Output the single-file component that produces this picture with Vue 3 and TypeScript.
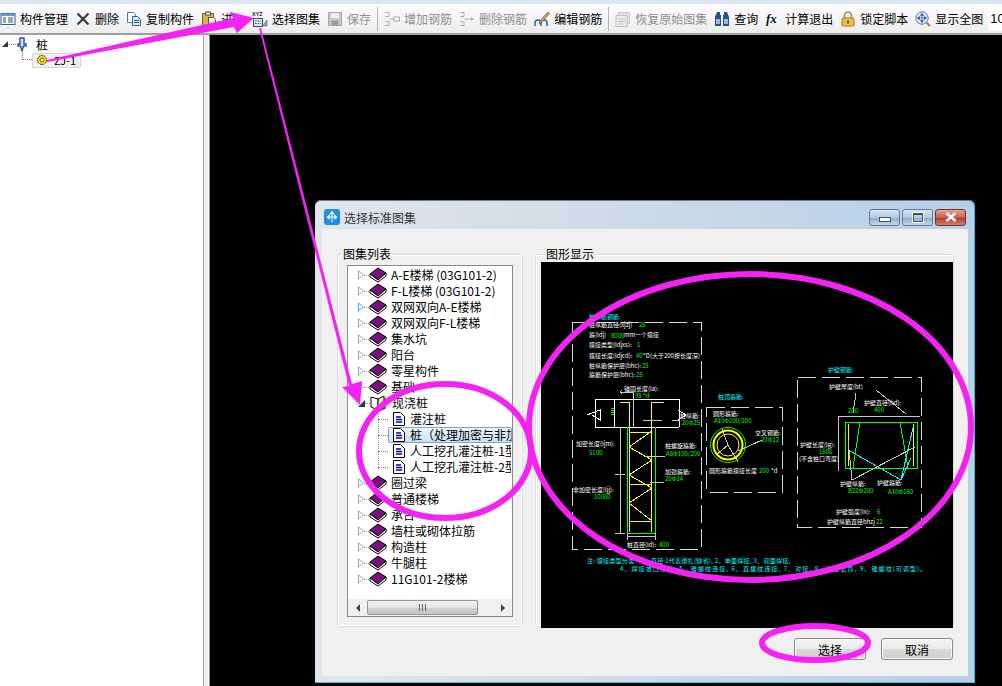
<template>
  <div class="app">
    <svg class="defs" width="0" height="0">
      <symbol id="i-mgr" viewBox="0 0 16 16">
        <rect x="1" y="2.5" width="14" height="11" fill="#fff" stroke="#2f5f9f" />
        <rect x="1" y="2.5" width="14" height="2.5" fill="#6f9ad0" />
        <path d="M3 7h3M3 9h3M3 11h3M8 7h5M8 9h5M8 11h5" stroke="#2a4f86" />
      </symbol>
      <symbol id="i-del" viewBox="0 0 16 16">
        <path d="M2.5 2.5l11 11M13.5 2.5l-11 11" stroke="#3c3c3c" stroke-width="2.2" />
      </symbol>
      <symbol id="i-copy" viewBox="0 0 16 16">
        <path d="M1.5 1.5h6l2 2v8h-8z" fill="#fff" stroke="#4f78b0" />
        <path d="M6.5 5.5h5l3 3v6h-8z" fill="#dbe8f8" stroke="#2f5f9f" />
        <path d="M8 9.5h5M8 11.5h5" stroke="#2f5f9f" />
      </symbol>
      <symbol id="i-paste" viewBox="0 0 16 16">
        <rect x="1.5" y="2.5" width="11" height="12" fill="#d8b24a" stroke="#7d5f17" />
        <rect x="4.5" y="1" width="5" height="3" fill="#e8e8e8" stroke="#555" />
        <path d="M7.5 6.5h5l2 2v6h-7z" fill="#fff" stroke="#555" />
      </symbol>
      <symbol id="i-xyz" viewBox="0 0 16 16">
        <rect x="1.5" y="7.5" width="9" height="8" fill="#dfe8f3" stroke="#2f4f80" />
        <path d="M3 10h6M3 12.5h6" stroke="#2f4f80" stroke-dasharray="1.5 1" />
        <path d="M10 15l5-6v6z" fill="#8aa7c8" stroke="#5a5a5a" stroke-width=".6" />
      </symbol>
      <symbol id="i-save" viewBox="0 0 16 16">
        <path d="M1.5 1.5h13v13h-13z" fill="#c9c9c9" stroke="#a6a6a6" />
        <rect x="4" y="2" width="8" height="5" fill="#f2f2f2" />
        <rect x="4.5" y="9.5" width="7" height="5" fill="#9d9d9d" />
      </symbol>
      <symbol id="i-add" viewBox="0 0 16 16">
        <path d="M1 1.5h4v4H1M1 10.5h4v4H1M5 8h4" fill="none" stroke="#b0b0b0" />
        <rect x="9.5" y="6" width="6" height="4" fill="#efefef" stroke="#b0b0b0" />
      </symbol>
      <symbol id="i-rem" viewBox="0 0 16 16">
        <path d="M1 1.5h4v4H1M1 10.5h4v4H1M5 8h8" fill="none" stroke="#b0b0b0" />
        <path d="M12 6l3 2-3 2z" fill="#b0b0b0" />
      </symbol>
      <symbol id="i-edit" viewBox="0 0 16 16">
        <path d="M1 15v-3q0-3 3-3t3 3v3M7 15v-3q0-3 3-3t3 3v3" fill="none" stroke="#2c5fa8" stroke-width="1.5" />
        <path d="M6 10l8-9 1.5 1.5-8 9-2.500 1z" fill="#e2a85a" stroke="#5c3f1b" stroke-width=".7" />
      </symbol>
      <symbol id="i-restore" viewBox="0 0 16 16">
        <rect x="3.500" y="1.500" width="11" height="11" fill="#e4e4e4" stroke="#c8c8c8" />
        <rect x="1" y="4.500" width="11" height="11" fill="#ececec" stroke="#c0c0c0" />
        <path d="M3 8h7M3 10.500h7M3 13h5" stroke="#c0c0c0" />
      </symbol>
      <symbol id="i-find" viewBox="0 0 16 16">
        <path d="M3 1h3v3h1v11H1V6zM10 1h3l2 5v9H9V4h1z" fill="#2c4f90" />
        <rect x="2" y="8" width="4" height="5" fill="#9cb8e4" />
        <rect x="10" y="8" width="4" height="5" fill="#9cb8e4" />
      </symbol>
      <symbol id="i-lock" viewBox="0 0 16 16">
        <path d="M4.500 7V4.500a3.500 3.500 0 0 1 7 0V7" fill="none" stroke="#9a8a5a" stroke-width="1.600" />
        <rect x="2" y="7" width="12" height="8" rx="1" fill="#f0c040" stroke="#a07818" />
        <rect x="7" y="9.500" width="2" height="3" fill="#6b4d0a" />
      </symbol>
      <symbol id="i-zoom" viewBox="0 0 16 16">
        <circle cx="7" cy="7" r="6.200" fill="#dbe6f6" stroke="#5878a8" />
        <path d="M7 3v8M3 7h8M7 2.500L5.500 4.500h3zM7 11.500L5.500 9.500h3zM2.500 7l2-1.500v3zM11.500 7l-2-1.500v3z" fill="#1f4f9c" stroke="#1f4f9c" stroke-width=".6" />
        <path d="M11.500 11.500l3.500 3.500" stroke="#b8763a" stroke-width="2" />
      </symbol>
      <symbol id="i-book" viewBox="0 0 18 16">
        <path d="M1 7l8-6 8 5-8 7z" fill="#7b0f7b" stroke="#000" />
        <path d="M1 7v3l8 5 8-6V6l-8 7z" fill="#fff" stroke="#000" />
      </symbol>
      <symbol id="i-open" viewBox="0 0 18 16">
        <path d="M1 2l7 2v11l-7-3z" fill="#fff" stroke="#000" />
        <path d="M8 4l6-3v11l-6 3z" fill="#f4ee9a" stroke="#000" />
        <path d="M15 3v10l-6 3" fill="none" stroke="#7b0f7b" stroke-width="1.500" />
      </symbol>
      <symbol id="i-doc" viewBox="0 0 14 16">
        <path d="M1.500 1.500h7l4 4v9h-11z" fill="#fff" stroke="#000" />
        <path d="M4 6h5M4 8.500h6M4 11h6" stroke="#0000a0" stroke-width="1.400" />
      </symbol>
    </svg>

    <header class="toolbar">
      <template v-for="item in tools" :key="item.label">
        <span v-if="item.sep" class="sep"></span>
        <div class="tool" :class="{ off: item.off }">
          <svg class="tool-icon" viewBox="0 0 16 16">
            <use v-if="item.icon" :href="'#' + item.icon" />
            <text v-if="item.icon === 'i-xyz'" x="0" y="5" class="xyz">XYZ</text>
            <text v-if="!item.icon" x="1" y="12" class="fx">fx</text>
          </svg>
          <span>{{ item.label }}</span>
        </div>
      </template>
      <div class="zoom-box">10</div>
    </header>

    <div class="main">
      <aside class="side">
        <div class="side-row">
          <span class="tri-open"></span>
          <span class="side-dots"></span>
          <svg class="pile-icon" viewBox="0 0 10 15">
            <path d="M3 1h4v6h2v2H6.500L5 14 3.500 9H1V7h2z" fill="#dfeafa" stroke="#2456b4" stroke-width="1.500" />
          </svg>
          <span class="side-label">桩</span>
        </div>
        <div class="side-row sub">
          <span class="side-twig"></span>
          <div class="side-chip">
            <svg class="gear" viewBox="0 0 12 12">
              <circle cx="6" cy="6" r="4.500" fill="#ffe600" stroke="#000" stroke-dasharray="1.500 1" />
              <circle cx="6" cy="6" r="2" fill="#fff" stroke="#6a5a00" />
            </svg>
            <span>ZJ-1</span>
          </div>
        </div>
      </aside>
      <div class="splitter"></div>

      <section class="canvas">
        <div class="dialog">
          <div class="titlebar">
            <svg class="title-icon" viewBox="0 0 16 16">
              <rect width="16" height="16" rx="3" fill="#1f8fea" />
              <path d="M8 3v10M3 8h10M8 2.500L6 5h4zM3 8l2.500-2v4zM13 8l-2.500-2v4z" fill="#fff" stroke="#fff" />
            </svg>
            <span class="title-text">选择标准图集</span>
            <div class="win-btns">
              <span class="win-btn"><i class="min"></i></span>
              <span class="win-btn"><i class="max"></i></span>
              <span class="win-btn close">
                <svg viewBox="0 0 12 10" width="12" height="10"><path d="M1.500 1l9 8M10.500 1l-9 8" stroke="#fff" stroke-width="2.400" /></svg>
              </span>
            </div>
          </div>

          <div class="dialog-body">
            <div class="panes">
              <div class="group list-group">
                <span class="group-label">图集列表</span>
                <div class="tree-box">
                  <div class="tree">
                    <template v-for="row in treeRows" :key="row.label">
                      <div v-if="row.kind !== 'doc'" class="row">
                        <span class="arrow" :class="row.state"></span>
                        <span class="row-dots"></span>
                        <svg class="book"><use :href="row.kind === 'open' ? '#i-open' : '#i-book'" /></svg>
                        <span class="row-text">{{ row.label }}</span>
                      </div>
                      <div v-else class="row leaf">
                        <span class="leaf-twig"></span>
                        <div class="leaf-body" :class="{ picked: row.state === 'picked' }">
                          <svg class="doc"><use href="#i-doc" /></svg>
                          <span class="row-text">{{ row.label }}</span>
                        </div>
                      </div>
                    </template>
                    <span class="tree-spine"></span>
                  </div>
                  <div class="hscroll">
                    <span class="scroll-arrow left"></span>
                    <div class="scroll-track">
                      <div class="scroll-thumb"><span class="grip"></span></div>
                    </div>
                    <span class="scroll-arrow right"></span>
                  </div>
                </div>
              </div>

              <div class="group view-group">
                <span class="group-label">图形显示</span>
                <svg class="drawing" viewBox="541 262 412 366" width="412" height="366">
                  <g fill="none" stroke="#d8d8d8" shape-rendering="crispEdges">
                    <rect v-for="r in dashRects" :key="r.x" :x="r.x" :y="r.y" :width="r.w" :height="r.h" stroke-dasharray="18 6" />
                  </g>
                  <path
                    v-for="p in cadPaths"
                    :key="p.d"
                    :d="p.d"
                    :stroke="p.c"
                    fill="none"
                    shape-rendering="crispEdges"
                  />
                  <circle cx="728" cy="445" r="17.500" fill="none" stroke="#00ff00" />
                  <circle cx="728" cy="445" r="14.500" fill="none" stroke="#ffff00" stroke-width="2" />
                  <circle cx="728" cy="445" r="11" fill="none" stroke="#ffff00" />
                  <text
                    v-for="t in cadTexts"
                    :key="t.s + t.x"
                    :x="t.x"
                    :y="t.y"
                    :fill="t.c"
                    :letter-spacing="t.sp"
                    class="cad"
                  >{{ t.s }}</text>
                </svg>
              </div>
            </div>

            <div class="footer">
              <button class="btn">选择</button>
              <button class="btn">取消</button>
            </div>
          </div>
        </div>
      </section>
    </div>

    <!-- 标注层：洋红箭头和圈 -->
    <svg class="marks" viewBox="0 0 1002 686" width="1002" height="686">
      <g fill="#f423f4">
        <polygon points="47,60 233,18 230,12 254,18 237,33 234,27 47,62" />
        <polygon points="259,28 261,28 352,384 362,381 360,405 342,387 349,386" />
      </g>
      <g fill="none" stroke="#f423f4" stroke-width="6">
        <ellipse cx="750" cy="427" rx="221" ry="153" />
        <ellipse cx="445" cy="451" rx="86" ry="67" />
        <ellipse cx="815" cy="643" rx="53" ry="17" />
      </g>
    </svg>
  </div>
</template>

<script setup lang="ts">
interface Tool {
  icon: string;
  label: string;
  off?: boolean;
  sep?: boolean;
}

interface TreeRow {
  label: string;
  kind: 'book' | 'open' | 'doc';
  state?: string;
}

const tools: Tool[] = [
  { icon: 'i-mgr', label: '构件管理' },
  { icon: 'i-del', label: '删除' },
  { icon: 'i-copy', label: '复制构件' },
  { icon: 'i-paste', label: '进入' },
  { icon: 'i-xyz', label: '选择图集' },
  { icon: 'i-save', label: '保存', off: true },
  { icon: 'i-add', label: '增加钢筋', off: true, sep: true },
  { icon: 'i-rem', label: '删除钢筋', off: true },
  { icon: 'i-edit', label: '编辑钢筋' },
  { icon: 'i-restore', label: '恢复原始图集', off: true, sep: true },
  { icon: 'i-find', label: '查询' },
  { icon: '', label: '计算退出' },
  { icon: 'i-lock', label: '锁定脚本' },
  { icon: 'i-zoom', label: '显示全图' },
];

const treeRows: TreeRow[] = [
  { label: 'A-E楼梯 (03G101-2)', kind: 'book' },
  { label: 'F-L楼梯 (03G101-2)', kind: 'book' },
  { label: '双网双向A-E楼梯', kind: 'book', state: 'hot' },
  { label: '双网双向F-L楼梯', kind: 'book' },
  { label: '集水坑', kind: 'book' },
  { label: '阳台', kind: 'book' },
  { label: '零星构件', kind: 'book' },
  { label: '基础', kind: 'book' },
  { label: '现浇桩', kind: 'open', state: 'down' },
  { label: '灌注桩', kind: 'doc' },
  { label: '桩（处理加密与非加密）', kind: 'doc', state: 'picked' },
  { label: '人工挖孔灌注桩-1型', kind: 'doc' },
  { label: '人工挖孔灌注桩-2型', kind: 'doc' },
  { label: '圈过梁', kind: 'book' },
  { label: '普通楼梯', kind: 'book' },
  { label: '承台', kind: 'book' },
  { label: '墙柱或砌体拉筋', kind: 'book' },
  { label: '构造柱', kind: 'book' },
  { label: '牛腿柱', kind: 'book' },
  { label: '11G101-2楼梯', kind: 'book' },
];

const W = '#ffffff';
const G = '#00ff00';
const Y = '#ffff00';
const C = '#00ffff';
const D = '#c8c8c8';

const dashRects = [
  { x: 572.5, y: 322, w: 129, h: 227 },
  { x: 706.5, y: 407, w: 76, h: 85 },
  { x: 797.5, y: 377.500, w: 124, h: 150 },
];

const cadPaths = [
  // 桩身
  { d: 'M595 399H679M595 427H679M595 399V427M679 399V427M614 399V427', c: W },
  { d: 'M627 427V533M655 427V533M627 533H655', c: G },
  { d: 'M620 402H629V532M664 402H651V532', c: Y },
  { d: 'M629 432H652M629 484H652M629 521H652', c: Y },
  { d: 'M652 431L629 447L652 460L629 475L652 488L629 503L652 521', c: Y },
  { d: 'M611 408H614M611 410H614M611 412H614M611 414H614', c: G },
  { d: 'M620 428V533M615 474H625M615 533H625M627 536H655M627 533V540M655 533V540', c: D },
  { d: 'M620 392H633M633 392V427M622 394L620 392L622 390M643 420H662M672 420H680M665 456H644M664 482H650', c: D },
  { d: 'M587 415L600 410V420L592 415M678 410L686 415L678 420', c: W },
  // 圆形配筋
  { d: 'M722 429L728 445L738 462M728 445L716 455M762 440L738 451', c: D },
  // 护壁
  { d: 'M838 416H920M838 416V471M856 393L853 413M876 390L906 414', c: D },
  { d: 'M845 422H917V468H845ZM860 422L853 468M900 422L908 468', c: G },
  { d: 'M848 424V466M913 424V466', c: Y },
  { d: 'M850 451L901 480L913 428M901 480L911 458', c: C },
  { d: 'M852 480L848 440M852 480L915 447', c: D },
];

const cadTexts: { s: string; x: number; y: number; c: string; sp?: number }[] = [
  { s: '桩纵筋钢筋:', x: 589, y: 319, c: C },
  { s: '桩纵筋直径(xjzj)', x: 589, y: 327, c: W },
  { s: '25', x: 639, y: 327, c: G },
  { s: '箍(ldj)', x: 589, y: 337, c: W },
  { s: '8000', x: 611, y: 338, c: G },
  { s: 'mm一个搭接', x: 624, y: 337, c: W },
  { s: '搭接类型(ldjxs):', x: 589, y: 347, c: W },
  { s: '1', x: 637, y: 347, c: G },
  { s: '搭接长度(ldjcd):', x: 589, y: 358, c: W },
  { s: '40', x: 636, y: 358, c: G },
  { s: '*D(大于200按长度深)', x: 643, y: 358, c: W },
  { s: '桩纵筋保护层(bhc):', x: 589, y: 368, c: W },
  { s: '25', x: 642, y: 368, c: G },
  { s: '箍筋保护层(bhc):', x: 589, y: 377, c: W },
  { s: '25', x: 636, y: 377, c: G },
  { s: '锚固长度(la):', x: 624, y: 391, c: W },
  { s: '35 *d', x: 635, y: 398, c: G },
  { s: '桩纵筋:', x: 680, y: 418, c: W },
  { s: '20Φ25', x: 682, y: 425, c: G },
  { s: '加密长度(ljm):', x: 576, y: 446, c: W },
  { s: '5100', x: 589, y: 455, c: G },
  { s: '桩螺旋箍筋:', x: 665, y: 448, c: W },
  { s: 'A8Φ100/200', x: 666, y: 456, c: G },
  { s: '加劲箍筋:', x: 665, y: 474, c: W },
  { s: '20Φ14', x: 665, y: 481, c: G },
  { s: '非加密长度(ljj):', x: 573, y: 492, c: W },
  { s: '10000', x: 594, y: 499, c: G },
  { s: '桩直径(ld):', x: 627, y: 547, c: W },
  { s: '400', x: 659, y: 547, c: G },
  { s: '注: 搭接类型分类: 一、直径 1代表绑扎(缺省), 2、单面焊接, 3、双面焊接,', x: 587, y: 563, c: C, sp: 0.3 },
  { s: '4、焊接坡口分类, 5、锥螺纹连接, 6、直螺纹连接, 7、对接, 8、焊接套筒, 9、锥螺纹(可调型)。', x: 620, y: 571, c: C, sp: 1.1 },
  { s: '桩顶箍筋:', x: 718, y: 399, c: C },
  { s: '圆形箍筋:', x: 713, y: 416, c: W },
  { s: 'A10Φ100/200', x: 714, y: 423, c: G },
  { s: '交叉钢筋:', x: 755, y: 435, c: W },
  { s: '20Φ12', x: 761, y: 442, c: G },
  { s: '圆形箍筋搭接长度', x: 709, y: 473, c: W },
  { s: '200', x: 759, y: 473, c: G },
  { s: '*d', x: 771, y: 473, c: W },
  { s: '护壁钢筋:', x: 828, y: 372, c: C },
  { s: '护壁厚度(bt)', x: 829, y: 389, c: W },
  { s: '200', x: 848, y: 413, c: G },
  { s: '护壁直径(hd):', x: 864, y: 405, c: W },
  { s: '400', x: 874, y: 412, c: G },
  { s: '护壁长度(lg):', x: 800, y: 447, c: W },
  { s: '1600', x: 819, y: 454, c: G },
  { s: '(不含桩口弯度)', x: 799, y: 461, c: W },
  { s: '护壁纵筋:', x: 840, y: 486, c: W },
  { s: 'B22Φ200', x: 848, y: 493, c: G },
  { s: '护壁箍筋:', x: 877, y: 485, c: W },
  { s: 'A10Φ150', x: 888, y: 494, c: G },
  { s: '护壁弧度(lx):', x: 836, y: 514, c: W },
  { s: '6', x: 877, y: 514, c: G },
  { s: '护壁纵筋直径bhzj', x: 827, y: 524, c: W },
  { s: '22', x: 876, y: 524, c: G },
];
</script>

<style scoped>
.app {
  position: relative;
  width: 1002px;
  height: 686px;
  overflow: hidden;
  display: flex;
  flex-direction: column;
  font-family: "Noto Sans CJK SC", "Liberation Sans", sans-serif;
  font-size: 12px;
  color: #000;
  background: #fff;
}

.defs {
  position: absolute;
}

.xyz {
  font: bold 5.500px "Liberation Sans", sans-serif;
  fill: #222;
}

.fx {
  font: italic bold 13px "Liberation Serif", serif;
  fill: #111;
}

.toolbar {
  height: 35px;
  box-sizing: border-box;
  flex: none;
  display: flex;
  align-items: center;
  gap: 7px;
  padding: 2px 0 2px 0;
  background: linear-gradient(#fdfdfe, #ededed);
  border-top: 4px solid #dce6f3;
  border-bottom: 2px solid #a0a0a0;
  white-space: nowrap;
}

.tool {
  display: flex;
  align-items: center;
  gap: 4px;
  flex: none;
}

.tool.off {
  color: #8f8f8f;
}

.tool-icon {
  width: 16px;
  height: 16px;
  flex: none;
}

.sep {
  width: 1px;
  height: 24px;
  margin: 0 -1px;
  background: #b4b4b4;
  flex: none;
}

.zoom-box {
  background: #fff;
  height: 24px;
  line-height: 24px;
  margin-left: -2px;
  padding-left: 2px;
  flex: 1;
  min-width: 0;
  font-family: "Liberation Sans", sans-serif;
  font-size: 13px;
}

.main {
  flex: 1;
  display: flex;
  min-height: 0;
}

.side {
  width: 204px;
  flex: none;
  padding-top: 1px;
  box-sizing: border-box;
  background: #fff;
  border-right: 1px solid #a0a0a0;
}

.side-row {
  display: flex;
  align-items: center;
  height: 16px;
  padding-left: 2px;
}

.side-row.sub {
  padding-left: 22px;
}

.tri-open {
  width: 0;
  height: 0;
  border-left: 6px solid transparent;
  border-bottom: 6px solid #333;
}

.side-dots {
  width: 7px;
  border-top: 1px dotted #777;
  margin: 0 1px 0 1px;
}

.pile-icon {
  width: 10px;
  height: 15px;
  margin-right: 9px;
}

.side-label {
  font-size: 12px;
}

.side-twig {
  width: 10px;
  height: 10px;
  margin-top: -10px;
  border-left: 1px dotted #777;
  border-bottom: 1px dotted #777;
  box-sizing: border-box;
}

.side-chip {
  display: flex;
  align-items: center;
  gap: 6px;
  height: 15px;
  width: 49px;
  box-sizing: border-box;
  padding-left: 3px;
  background: #f0f0f0;
  border: 1px solid #d4d4d4;
  border-radius: 2px;
  font-size: 11px;
}

.gear {
  width: 12px;
  height: 12px;
}

.splitter {
  width: 4px;
  flex: none;
  background: #efefef;
}

.canvas {
  flex: 1;
  position: relative;
  background: #000;
  border-left: 1px solid #8c8c8c;
  border-top: 1px solid #000;
  margin-left: 1px;
}

.dialog {
  position: absolute;
  left: 105px;
  top: 164px;
  width: 660px;
  height: 483px;
  box-sizing: border-box;
  display: flex;
  flex-direction: column;
  padding: 0 6px 6px 7px;
  background: linear-gradient(90deg, #e0e6ec, #c9d8e6 60%, #b4d0ea);
  border-right: 1px solid #35c0e0;
  border-bottom: 1px solid #35c0e0;
  border-radius: 6px 6px 0 0;
  box-shadow: inset 0 1px 0 #6b7f92;
}

.titlebar {
  height: 29px;
  box-sizing: border-box;
  padding: 5px 0 0 2px;
  flex: none;
  display: flex;
  align-items: center;
  gap: 4px;
}

.title-icon {
  width: 16px;
  height: 16px;
}

.title-text {
  color: #333;
}

.win-btns {
  margin-left: auto;
  display: flex;
  gap: 2px;
  margin-right: 2px;
}

.win-btn {
  width: 29px;
  height: 15px;
  display: flex;
  align-items: center;
  justify-content: center;
  border: 1px solid #5f7d9c;
  border-radius: 3px;
  box-sizing: content-box;
  background: linear-gradient(#dae6f2, #b4c8dc 50%, #8dacca 52%, #c4d6e6);
}

.win-btn.close {
  border-color: #7a3030;
  background: linear-gradient(#e8a090, #c9604c 50%, #b03a28 52%, #d08070);
}

.min {
  width: 10px;
  height: 3px;
  margin-top: 4px;
  background: #fff;
  border: 1px solid #40566e;
}

.max {
  width: 8px;
  height: 6px;
  background: transparent;
  border: 1px solid #40566e;
  border-top-width: 2px;
  box-shadow: 0 0 0 1px #fff;
}

.dialog-body {
  flex: 1;
  min-height: 0;
  background: #f0f0f0;
  padding: 25px 14px 0 15px;
  display: flex;
  flex-direction: column;
}

.panes {
  display: flex;
  gap: 12px;
  height: 373px;
  flex: none;
}

.group {
  position: relative;
  box-sizing: border-box;
  border: 1px solid #dcdfe2;
  border-radius: 3px;
  box-shadow: 0 0 0 1px #fff inset;
}

.group-label {
  position: absolute;
  left: 4px;
  top: -8px;
  background: #f0f0f0;
  padding: 0 1px;
  line-height: 14px;
}

.view-group .group-label {
  left: 9px;
}

.list-group {
  width: 186px;
  padding: 10px 9px 9px 9px;
}

.tree-box {
  height: 100%;
  box-sizing: border-box;
  background: #fff;
  border: 1px solid #8a8a8a;
  display: flex;
  flex-direction: column;
}

.tree {
  position: relative;
  flex: 1;
  padding-top: 1px;
  overflow: hidden;
  min-height: 0;
}

.row {
  height: 16px;
  display: flex;
  align-items: center;
  padding-left: 10px;
  white-space: nowrap;
}

.arrow {
  width: 0;
  height: 0;
  flex: none;
  position: relative;
  border-left: 6px solid #a8a8a8;
  border-top: 5px solid transparent;
  border-bottom: 5px solid transparent;
}

.arrow::after {
  content: "";
  position: absolute;
  left: -5px;
  top: -3px;
  border-left: 4px solid #fff;
  border-top: 3px solid transparent;
  border-bottom: 3px solid transparent;
}

.arrow.hot {
  border-left-color: #38b4f0;
}

.arrow.down {
  border-left: 7px solid transparent;
  border-top: 0;
  border-bottom: 7px solid #333;
}

.arrow.down::after {
  display: none;
}

.row-dots {
  width: 5px;
  flex: none;
  border-top: 1px dotted #888;
}

.book {
  width: 18px;
  height: 16px;
  flex: none;
  margin-right: 4px;
}

.row-text {
  flex: none;
  margin-bottom: 2px;
}

.row.leaf {
  padding-left: 30px;
}

.leaf-twig {
  width: 10px;
  flex: none;
  border-top: 1px dotted #888;
}

.leaf-body {
  flex: 1;
  height: 16px;
  box-sizing: border-box;
  display: flex;
  align-items: center;
  gap: 4px;
  padding-left: 3px;
  border: 1px solid transparent;
  overflow: hidden;
}

.leaf-body.picked {
  border-color: #7da2ce;
  border-radius: 2px;
  background: linear-gradient(#eef5fd, #c8dff8);
}

.doc {
  width: 14px;
  height: 16px;
  flex: none;
}

.tree-spine {
  position: absolute;
  left: 30px;
  top: 146px;
  height: 57px;
  border-left: 1px dotted #888;
}

.hscroll {
  height: 17px;
  flex: none;
  display: flex;
  align-items: center;
  background: #f0f0f0;
}

.scroll-arrow {
  width: 19px;
  flex: none;
  display: flex;
  justify-content: center;
}

.scroll-arrow::before {
  content: "";
  border-top: 4px solid transparent;
  border-bottom: 4px solid transparent;
}

.scroll-arrow.left::before {
  border-right: 4px solid #444;
}

.scroll-arrow.right::before {
  border-left: 4px solid #444;
}

.scroll-track {
  flex: 1;
}

.scroll-thumb {
  width: 111px;
  height: 15px;
  box-sizing: border-box;
  border: 1px solid #979797;
  border-radius: 2px;
  background: linear-gradient(#f2f2f2, #e4e4e4 50%, #cfcfcf 52%, #c4c4c4);
  display: flex;
  align-items: center;
  justify-content: center;
}

.grip {
  width: 7px;
  height: 7px;
  background: repeating-linear-gradient(90deg, #666 0 1px, transparent 1px 3px);
}

.view-group {
  width: 419px;
  padding: 7px 0 0 5px;
}

.drawing {
  display: block;
  background: #000;
}

.cad {
  font-size: 6px;
  font-family: "Noto Sans CJK SC", sans-serif;
}

.footer {
  display: flex;
  justify-content: flex-end;
  gap: 15px;
  margin-top: 11px;
  padding-right: 1px;
}

.btn {
  width: 72px;
  height: 22px;
  padding: 0;
  font: inherit;
  color: #000;
  border: 1px solid #8a8a8a;
  border-radius: 3px;
  background: linear-gradient(#f4f4f4, #ebebeb 50%, #d8d8d8 52%, #cfcfcf);
  box-shadow: inset 0 0 0 1px #fafafa;
}

.marks {
  position: absolute;
  left: 0;
  top: 0;
  pointer-events: none;
}
</style>
